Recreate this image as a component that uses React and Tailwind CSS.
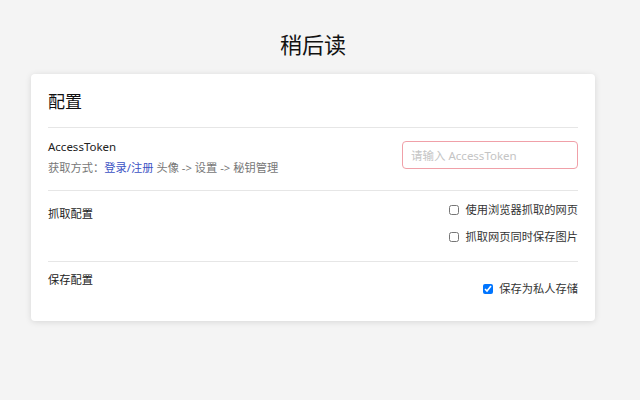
export default function App() {
  return (
    <div
      className="w-[640px] h-[400px] bg-[#f4f4f4] text-[#222]"
      style={{ fontFamily: '"Noto Sans", "Noto Sans CJK SC", sans-serif' }}
    >
      <div className="w-[626px] flex flex-col items-center">
        <h1 className="pt-[29px] h-[74px] text-[22px] leading-[30px] font-normal text-[#111]">稍后读</h1>
        <div className="w-[564px] bg-white rounded shadow-[0_1px_6px_rgba(0,0,0,0.12)] px-[17px]">
          <div className="h-[54px] flex items-center border-b border-[#e6e6e6] text-[17px] text-[#111] pt-[2px]">
            配置
          </div>
          <div className="h-[63px] flex items-start justify-between border-b border-[#e6e6e6] pt-[10px]">
            <div className="flex flex-col">
              <span className="text-[11.5px] leading-[18px] text-[#222]">AccessToken</span>
              <span className="text-[11.25px] leading-[20px] text-[#777] mt-[2px]">
                获取方式：<a className="text-[#3b52c4]">登录/注册</a> 头像 -&gt; 设置 -&gt; 秘钥管理
              </span>
            </div>
            <input
              placeholder="请输入 AccessToken"
              className="mt-[3px] w-[176px] h-[28px] rounded border border-[#f0a0a8] px-[8px] text-[11.5px] placeholder:text-[#c4c4c4] outline-none"
            />
          </div>
          <div className="h-[71px] flex items-start justify-between border-b border-[#e6e6e6] pt-[14px]">
            <span className="text-[11.25px] leading-[18px]">抓取配置</span>
            <div className="flex flex-col items-end gap-[9px] -mt-[4px]">
              <label className="flex items-center gap-[6px] text-[11.25px] leading-[18px] text-[#333]">
                <input type="checkbox" className="w-[10px] h-[10px]" />
                使用浏览器抓取的网页
              </label>
              <label className="flex items-center gap-[6px] text-[11.25px] leading-[18px] text-[#333]">
                <input type="checkbox" className="w-[10px] h-[10px]" />
                抓取网页同时保存图片
              </label>
            </div>
          </div>
          <div className="h-[59px] flex items-start justify-between pt-[9px]">
            <span className="text-[11.25px] leading-[18px]">保存配置</span>
            <label className="mt-[9px] flex items-center gap-[6px] text-[11.25px] leading-[18px] text-[#333]">
              <input type="checkbox" defaultChecked className="w-[10px] h-[10px]" />
              保存为私人存储
            </label>
          </div>
        </div>
      </div>
    </div>
  )
}
